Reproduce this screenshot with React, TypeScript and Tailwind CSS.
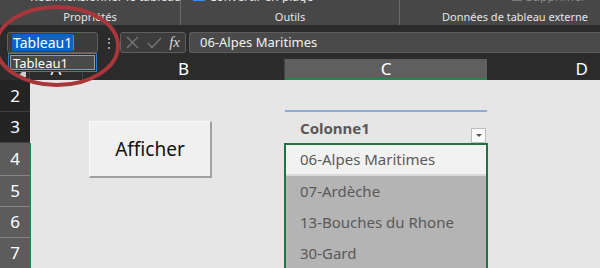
import React from 'react';

const rows = [
  { n: 2, h: 'h-[32px]', sel: false },
  { n: 3, h: 'h-[31px]', sel: false },
  { n: 4, h: 'h-[33px]', sel: true },
  { n: 5, h: 'h-[31px]', sel: true },
  { n: 6, h: 'h-[31px]', sel: true },
  { n: 7, h: 'h-[31px]', sel: true },
];

const items = ['07-Ardèche', '13-Bouches du Rhone', '30-Gard'];

export default function App() {
  return (
    <div className="relative w-[600px] h-[268px] overflow-hidden bg-[#2b2b2b] font-['Noto_Sans','Open_Sans',sans-serif] select-none">
      {/* ribbon (scrolled, only the group labels are fully visible) */}
      <div className="flex h-[25px] bg-[#474747] text-[11px] text-[#e6e6e6] overflow-hidden whitespace-nowrap">
        <div className="w-[181px] shrink-0 flex flex-col items-center border-r border-[#6a6a6a]">
          <div className="flex items-center gap-1 -mt-[9px] h-[12px] leading-[12px] self-stretch overflow-hidden pl-[26px]">
            <span className="w-[8px] h-[8px] bg-[#3a8ee6]" />
            <span className="text-[12px]">Redimensionner le tableau</span>
          </div>
          <span className="mt-[6px]">Propriétés</span>
        </div>
        <div className="w-[219px] shrink-0 flex flex-col items-center border-r border-[#6a6a6a]">
          <div className="flex items-center gap-1 -mt-[9px] h-[12px] leading-[12px] self-stretch overflow-hidden pl-[12px]">
            <span className="w-[12px] h-[8px] bg-[#3a8ee6]" />
            <span className="text-[12px]">Convertir en plage</span>
          </div>
          <span className="mt-[6px]">Outils</span>
        </div>
        <div className="flex-1 min-w-0 flex flex-col items-end pr-[12px]">
          <div className="flex items-center gap-1 -mt-[9px] h-[12px] leading-[12px] self-stretch overflow-hidden pl-[112px] text-[#8a8a8a]">
            <span className="w-[10px] h-[8px] shrink-0 bg-[#7a7a7a]" />
            <span className="text-[12px]">Supprimer le lien</span>
          </div>
          <span className="mt-[6px]">Données de tableau externe</span>
        </div>
      </div>

      <div className="h-[6px] bg-[#2b2b2b]" />

      {/* formula bar */}
      <div className="flex items-center h-[27px] pl-[7px] pb-[4px] gap-[3px]">
        <div className="w-[91px] h-[21px] rounded-[3px] border border-[#5f5f5f] bg-[#3c3c3c] flex items-center pl-[4px] text-[14px]">
          <span className="bg-[#0a64c8] text-white leading-[17px] px-[1px]">Tableau1</span>
          <span className="w-[1px] h-[15px] bg-[#e0603a]" />
        </div>
        <div className="w-[16px] text-center text-[#bdbdbd] text-[14px] leading-none">⋮</div>
        <div className="w-[66px] h-[21px] rounded-[3px] border border-[#5f5f5f] bg-[#3c3c3c] flex items-center justify-between px-[5px]">
          <svg width="13" height="13" viewBox="0 0 13 13" className="stroke-[#7a7a7a]" fill="none" strokeWidth="1.2">
            <path d="M1 1L12 12M12 1L1 12" />
          </svg>
          <svg width="15" height="12" viewBox="0 0 15 12" className="stroke-[#7a7a7a]" fill="none" strokeWidth="1.2">
            <path d="M1 6L5 10.5L14 1" />
          </svg>
          <span className="font-['Liberation_Serif',serif] italic text-[15px] text-[#d8d8d8] leading-none">fx</span>
        </div>
        <div className="flex-1 h-[21px] rounded-l-[3px] border border-r-0 border-[#5f5f5f] bg-[#4a4a4a] flex items-center pl-[10px] text-[13px] text-[#f0f0f0]">
          06-Alpes Maritimes
        </div>
      </div>

      {/* column headers */}
      <div className="flex h-[22px] bg-[#2b2b2b] text-[17px] text-white">
        <div className="w-[30px] border-r border-[#444] flex items-end justify-end pr-[3px] pb-[3px]">
          <span className="w-0 h-0 border-l-[9px] border-l-transparent border-b-[9px] border-b-[#cfcfcf]" />
        </div>
        <div className="w-[53px] border-r border-[#444] flex items-center justify-center">A</div>
        <div className="w-[202px] border-r border-[#444] flex items-center justify-center">B</div>
        <div className="w-[202px] mt-[1px] bg-[#5f5f5f] border-b-2 border-[#1d8a4e] flex items-center justify-center">C</div>
        <div className="flex-1 flex items-center justify-end pr-[12px]">D</div>
      </div>

      {/* grid */}
      <div className="flex">
        <div className="w-[30px] flex flex-col text-[17px] text-white">
          {rows.map((r) => (
            <div
              key={r.n}
              className={`${r.h} flex items-center justify-center border-b ${r.sel ? 'bg-[#5c5c5c] border-[#858585]' : 'bg-[#242424] border-[#3e3e3e]'}`}
            >
              {r.n}
            </div>
          ))}
        </div>
        <div className="relative flex-1 flex bg-[#e6e6e6]">
          <div className="w-[53px] flex flex-col">
            <div className="h-[63px]" />
            <div className="flex-1 border-l border-[#1d8a4e]" />
          </div>
          <div className="w-[202px]" />
          {/* table column C */}
          <div className="w-[202px] flex flex-col text-[15px] text-[#595959]">
            <div className="h-[32px] border-b-2 border-[#8eaadb]" />
            <div className="h-[31px] flex items-center justify-between pl-[15px] pr-[1px]">
              <span className="font-bold mt-[1px]">Colonne1</span>
              <span className="w-[15px] h-[15px] mt-[16px] bg-[#fbfbfb] border border-[#bdbdbd] flex items-center justify-center">
                <span className="w-0 h-0 border-l-[3px] border-r-[3px] border-t-[3px] border-l-transparent border-r-transparent border-t-[#555]" />
              </span>
            </div>
            <div className="-ml-[1px] -mr-[1px] border-2 border-b-0 border-[#217346] flex flex-col flex-1">
              <div className="h-[31px] bg-[#f2f2f2] border-b-2 border-[#d9d9d9] flex items-center pl-[14px]">06-Alpes Maritimes</div>
              {items.map((t) => (
                <div key={t} className="h-[31px] bg-[#b4b4b4] flex items-center pl-[14px]">
                  {t}
                </div>
              ))}
            </div>
          </div>
          <div className="flex-1" />

          {/* form button */}
          <button className="absolute left-[59px] top-[41px] w-[123px] h-[57px] bg-[#f0f0f0] border-t border-l border-[#fafafa] border-r-2 border-b-2 border-r-[#a0a0a0] border-b-[#a0a0a0] text-[19px] text-[#111] font-['Noto_Sans',sans-serif]">
            Afficher
          </button>
        </div>
      </div>

      {/* name box dropdown list */}
      <div className="absolute left-[8px] top-[53px] w-[89px] h-[19px] border border-[#2a7fd4] bg-[#2b2b2b] p-[1px]">
        <div className="h-full border border-[#9a9a9a] bg-[#4a4a4a] text-[13px] text-white leading-[14px] pl-[2px]">Tableau1</div>
      </div>

      {/* red ellipse annotation */}
      <svg className="absolute left-0 top-0 pointer-events-none" width="600" height="268">
        <ellipse cx="57" cy="46" rx="61" ry="39" fill="none" stroke="#a8363a" strokeWidth="4" />
      </svg>
    </div>
  );
}
